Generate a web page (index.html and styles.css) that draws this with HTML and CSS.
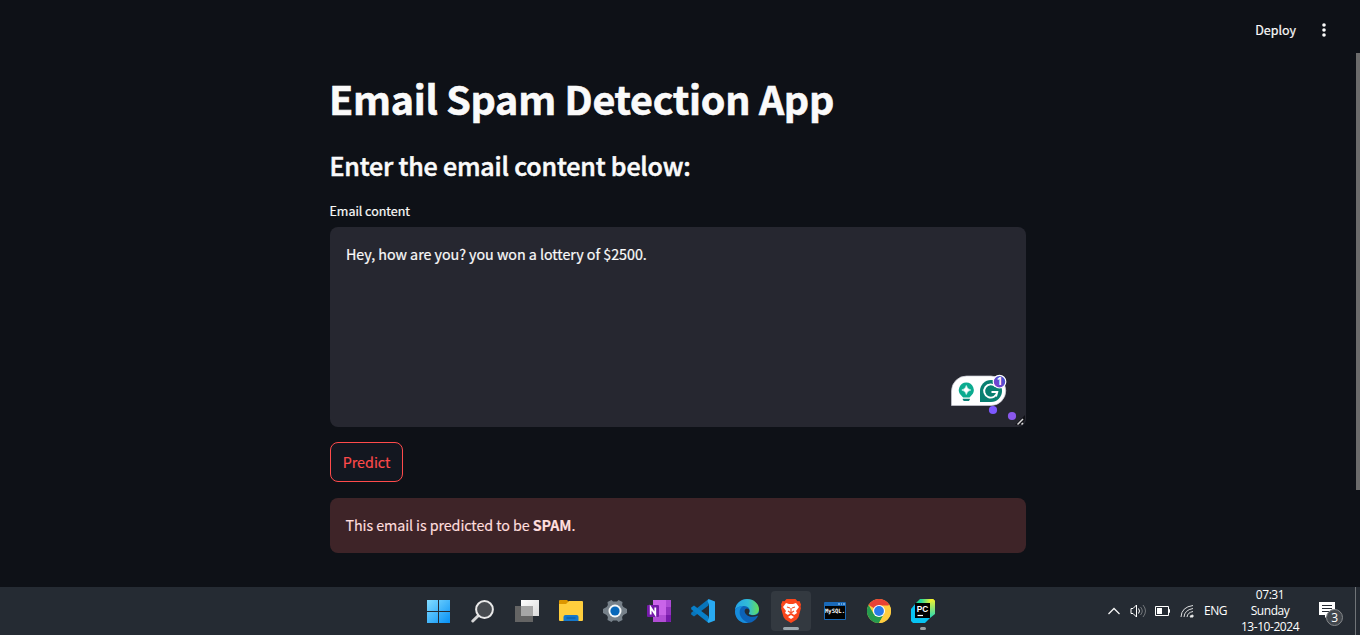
FILE: index.html
```html
<!DOCTYPE html>
<html lang="en">
<head>
<meta charset="utf-8">
<title>Email Spam Detection App</title>
<link rel="stylesheet" href="styles.css">
</head>
<body>
<div class="screen">
  <div class="app">
    <header class="toolbar">
      <span class="deploy">Deploy</span>
      <svg class="kebab" width="6" height="16" viewBox="0 0 6 16" fill="#fafafa"><circle cx="3" cy="3" r="1.8"/><circle cx="3" cy="8" r="1.8"/><circle cx="3" cy="13" r="1.8"/></svg>
    </header>
    <main class="content">
      <h1 class="title">Email Spam Detection App</h1>
      <h2 class="subtitle">Enter the email content below:</h2>
      <div class="label">Email content</div>
      <div class="textarea"><span class="value">Hey, how are you? you won a lottery of $2500.</span>
        <svg class="assistant" width="80" height="56" viewBox="946 371 80 56">
          <defs><linearGradient id="badge" x1="0" y1="1" x2="1" y2="0"><stop offset="0" stop-color="#8a3bd0"/><stop offset="1" stop-color="#3558cc"/></linearGradient></defs>
          <path d="M951.5 405.5V391a15 15 0 0 1 15-15H991a14.5 14.5 0 0 1 0 29.5z" fill="#fff" stroke="#c9cad2" stroke-width=".7"/>
          <path d="M966.300 382.500a7.500 7.500 0 0 1 5 13l-1.800 2h-6.400l-1.800-2a7.500 7.500 0 0 1 5-13z" fill="#0bab8f"/>
          <path d="M966.300 385.500q.7 3.800 4.500 4.500-3.800.7-4.500 4.500-.7-3.800-4.500-4.500 3.800-.7 4.500-4.500z" fill="#fff" stroke="#fff" stroke-width=".6"/>
          <path d="M962.800 398.700h7v1.100l-1 1.200h-5l-1-1.200z" fill="#087f73"/>
          <path d="M980 402v-11a11 11 0 1 1 11 11z" fill="#087f70"/>
          <path d="M995.800 386.700a6.600 6.600 0 1 0 1.500 5.300H991.500M997.300 392l-1.300 4.500" fill="none" stroke="#fff" stroke-width="1.9"/>
          <circle cx="999.500" cy="381.700" r="6.300" fill="url(#badge)" stroke="#fff" stroke-width="1.200"/>
          <text x="999.500" y="385.400" text-anchor="middle" class="badge-text">1</text>
          <circle cx="993" cy="410" r="4.100" fill="#7d58ff"/><circle cx="1012" cy="416" r="4.100" fill="#8a58ec"/>
          <path d="M1015 425l10-10v5l-4 5z" fill="#101116"/>
          <path d="M1017.500 424.500l5.500-5.500M1021.500 424.500l1.500-1.500" stroke="#d8d8d8" stroke-width="1.500"/>
        </svg>
      </div>
      <button class="predict">Predict</button>
      <div class="alert">This email is predicted to be <strong>SPAM</strong>.</div>
    </main>
    <div class="scrollbar"></div>
  </div>

  <footer class="taskbar">
    <nav class="apps">
      <span class="cell low"><svg width="24" height="24" viewBox="0 0 24 24"><defs><linearGradient id="win" gradientUnits="userSpaceOnUse" x1="0" y1="0" x2="24" y2="24"><stop offset="0" stop-color="#83dcff"/><stop offset="1" stop-color="#008df5"/></linearGradient></defs><path d="M0 0h11v11H0zM12 0h11v11H12zM0 12h11v11H0zM12 12h11v11H12z" fill="url(#win)"/></svg></span>
      <span class="cell low"><svg width="24" height="24" viewBox="0 0 24 24"><path d="M8 15L1.800 21" stroke="#d4d5d6" stroke-width="3" stroke-linecap="round"/><circle cx="13.500" cy="9.500" r="8.400" fill="#474b50" stroke="#e9e9e9" stroke-width="2"/></svg></span>
      <span class="cell low"><svg width="24" height="24" viewBox="0 0 24 24"><defs><linearGradient id="tv" x1="0" y1="0" x2="1" y2="1"><stop stop-color="#fff"/><stop offset="1" stop-color="#d9d9d9"/></linearGradient></defs><path d="M6 0h18v16H6z" fill="url(#tv)"/><path d="M0 6h18v16H0z" fill="#646464"/><path d="M6 6h12v10H6z" fill="#a6a6a6"/></svg></span>
      <span class="cell low"><svg width="24" height="24" viewBox="0 0 24 24"><path d="M0 1q0-1 1-1h7l2 2-2 3H0z" fill="#dc9600"/><path d="M0 4h7l3-3h13q1 0 1 1v18q0 1-1 1H1q-1 0-1-1z" fill="#ffce3d"/><path d="M4.500 21v-4q0-2 2-2h11q2 0 2 2v4z" fill="#1477cb"/><path d="M7.500 18h9" stroke="#0759a5" stroke-width="1.200"/></svg></span>
      <span class="cell low"><svg width="24" height="24" viewBox="0 0 24 24"><path d="M8.500 0l1.500 1.500h4L15.500 0l4 2-.4 3 1.300 2 3.600 2v4l-3.600 2-1.300 2 .4 3-4 2-1.500-1.500h-4L8.500 22l-4-2 .4-3-1.300-2L0 13V9l3.600-2 1.300-2-.4-3z" fill="#77818a"/><circle cx="12" cy="11" r="6.500" fill="#f4f7f8"/><circle cx="12" cy="11" r="4.600" fill="#0868ba"/></svg></span>
      <span class="cell low"><svg width="24" height="24" viewBox="0 0 24 24"><path d="M6 0h17q1 0 1 1v20q0 1-1 1H6z" fill="#ca64e9"/><path d="M19 0h4q1 0 1 1v6h-5z" fill="#ae4bd5"/><path d="M19 7h5v8h-5z" fill="#9332bf"/><path d="M6 15h18v6q0 1-1 1H6z" fill="#7719aa" opacity=".3"/><path d="M19 15h5v6q0 1-1 1h-4z" fill="#7719aa"/><rect y="5" width="12" height="12" rx="1" fill="#751aaa"/><path d="M3.700 14.500v-7l4.600 7v-7" fill="none" stroke="#fff" stroke-width="1.800"/></svg></span>
      <span class="cell"><svg width="24" height="24" viewBox="0 0 24 24"><path d="M17.500 0v6.500L3 17.500.2 15.600v-1.800z" fill="#0874b9"/><path d="M17.500 24v-6.500L3 6.500.2 8.400v1.800z" fill="#087fc9"/><path d="M17.500 0L24 2.500v19L17.500 24l-1-1.500L18 18V6l-1.500-4z" fill="#29aaf2"/></svg></span>
      <span class="cell"><svg width="24" height="24" viewBox="0 0 24 24"><defs><linearGradient id="edge"><stop stop-color="#25a3e5"/><stop offset=".55" stop-color="#31bdd7"/><stop offset="1" stop-color="#65df55"/></linearGradient></defs><circle cx="12" cy="12" r="12" fill="#0c62b8"/><path d="M0 11C1 4 6 0 12 0c7 0 12 5 12 10 0 4-3 6-6 6-3 0-5-1-4-2 2-3 0-7-5-7-4 0-7 1-9 4z" fill="url(#edge)"/><path d="M0 12c1-3 4-5 8-5-3 2-4 5-3 9 1 3 4 6 8 8C5 25 0 19 0 12z" fill="#178cdb"/><path d="M10.500 10c-1.500 1.500-1 3.500.5 5.200 3 3 7.500 3.200 11.500 1.500l1.500 0v-3c-1.500 1.800-3.500 2.500-6 2.500-3 0-5-1-4-2.200.8-1.500.5-3-.5-4-1-.8-2.200-.8-3 0z" fill="#252b33"/></svg></span>
      <span class="cell active"><svg width="24" height="24" viewBox="0 0 24 24"><path d="M7.500 0h9l2 2.300 2-.3L22 5.500 21.500 8l.5 1-2.500 9-1.800 2.500L12 24l-5.700-3.500L4.500 18 2 9l.5-1L2 5.500 3.500 2l2 .3z" fill="#fb461b"/><path d="M7 4l3 1h4l3-1 3 4-3 4 1 2-3 2-1-1-2-1-2 1-1 1-3-2 1-2-3-4zM9 18l3-2 3 2-3 2z" fill="#fff"/><path d="M8 8l3 1M16 8l-3 1M12 9v5M9 12l3 2 3-2" stroke="#f7522a" stroke-width="1.200" fill="none"/></svg></span>
      <span class="cell"><svg width="24" height="24" viewBox="0 0 24 24"><rect x="1" y="3" width="22" height="18" rx="1" fill="#1969b8"/><path d="M2 7h20v13H2z" fill="#020303"/><path d="M15 5h2M18 5h1M20 5h2" stroke="#b9dfff"/><text x="2" y="13.500" class="mysql" textLength="20" lengthAdjust="spacingAndGlyphs">MySQL.</text></svg></span>
      <span class="cell"><svg width="24" height="24" viewBox="0 0 24 24"><circle cx="12" cy="12" r="12" fill="#ffcd40"/><path d="M12 12L1.600 6A12 12 0 0 1 22.400 6z" fill="#e84235"/><path d="M1.600 6A12 12 0 0 0 12 24l5.200-9L12 12 6.800 15z" fill="#259b4e"/><path d="M12 6.500h10.700A12 12 0 0 1 12 24l5-9z" fill="#ffcd40"/><circle cx="12" cy="12" r="6" fill="#fff"/><circle cx="12" cy="12" r="4.900" fill="#287ae9"/></svg></span>
      <span class="cell running"><svg width="24" height="24" viewBox="0 0 24 24"><defs><linearGradient id="pc"><stop stop-color="#21d789"/><stop offset=".3" stop-color="#21d7a0"/><stop offset=".8" stop-color="#f6f32b"/></linearGradient><linearGradient id="pcr" x2="0" y2="1"><stop stop-color="#f6f32b"/><stop offset="1" stop-color="#21d7b9"/></linearGradient></defs><path d="M0 10l5-6 14 15-5 5H2l-2-2z" fill="#07c3f2"/><path d="M4 5l5-5h13l2 2-5 3z" fill="url(#pc)"/><path d="M19 4l3-4 2 2v13l-5 4z" fill="url(#pcr)"/><path d="M4 4h15v15H4z" fill="#000"/><text x="5.800" y="12.500" class="pc" textLength="11.500" lengthAdjust="spacingAndGlyphs">PC</text><path d="M6.500 16.500h5.500" stroke="#fff" stroke-width="1.200"/></svg></span>
    </nav>
    <div class="tray">
      <svg class="chevron" width="14" height="10" viewBox="0 0 14 10"><path d="M1.500 8L7 2.500 12.500 8" fill="none" stroke="#f4f4f4" stroke-width="1.300"/></svg>
      <svg class="speaker" width="17" height="14" viewBox="0 0 17 14" fill="none"><path d="M1 4.500h2L6.500 1v12L3 9.500H1z" stroke="#fff"/><path d="M8.500 4.500q2 2.500 0 5" stroke="#fff"/><path d="M10.500 3q3.500 4 0 8M13 1q5 6 0 12" stroke="#73777b"/></svg>
      <svg class="battery" width="16" height="10" viewBox="0 0 16 10"><path d="M.5.500h13v9H.500zM13.500 3.500h1v3h-1" fill="none" stroke="#fff"/><path d="M2 2h5v6H2z" fill="#fff"/></svg>
      <svg class="wifi" width="14" height="14" viewBox="0 0 14 14" fill="none" stroke="#dedfe0"><path d="M1 13Q1.500 3 13 1.500M4 13Q4.500 6 13 4.500M7 13Q7.500 8.500 13 7.500"/><path d="M10 13q0-2 3-2v2z" fill="#fff"/></svg>
      <span class="lang">ENG</span>
      <div class="clock"><div>07:31</div><div>Sunday</div><div>13-10-2024</div></div>
      <svg class="notify" width="26" height="26" viewBox="0 0 26 26"><path d="M0 0h16v13H9l-3 3v-3H0z" fill="#fff"/><path d="M3 3.500h10M3 6.500h10M3 9.500h7" stroke="#252b34"/><circle cx="15.500" cy="15.500" r="8" fill="#42474d" stroke="#85888b"/><text x="15.500" y="19.500" text-anchor="middle" class="count">3</text></svg>
      <span class="edge-line"></span>
    </div>
  </footer>
</div>
</body>
</html>
```
FILE: styles.css
```css
* { box-sizing: border-box; }
body { margin: 0; background: #0e1117; color: #fafafa; font-family: "Noto Sans CJK SC", sans-serif; }
.screen { width: 1360px; height: 635px; display: flex; flex-direction: column; overflow: hidden; }
.app { height: 587px; position: relative; }
.toolbar { height: 60px; display: flex; justify-content: flex-end; align-items: center; gap: 25px; padding-right: 33px; }
.deploy { font-size: 12.5px; line-height: 20px; -webkit-text-stroke: .2px; }
.content { width: 696px; margin-left: 330px; display: flex; flex-direction: column; align-items: flex-start; }
.title { margin: 12px 0 0 -1px; font-size: 39.4px; line-height: 52px; font-weight: 700; letter-spacing: -.26px; -webkit-text-stroke: .6px; white-space: nowrap; }
.subtitle { margin: 24px 0 0 -.5px; font-size: 25px; line-height: 34px; font-weight: 500; letter-spacing: -.18px; -webkit-text-stroke: .55px; white-space: nowrap; }
.label { margin: 19px 0 0 -.5px; font-size: 12.5px; line-height: 20px; letter-spacing: -.03px; -webkit-text-stroke: .2px; }
.textarea { margin-top: 6px; width: 696px; height: 200px; border-radius: 8px; background: #262730; padding: 15px 16px; position: relative; overflow: hidden; font-size: 14.3px; line-height: 24px; letter-spacing: -.035px; -webkit-text-stroke: .2px; }
.assistant { position: absolute; right: 0; bottom: 0; -webkit-text-stroke: 0; }
.badge-text { font: bold 10px "Open Sans", sans-serif; fill: #fff; }
.predict { margin: 15px 0 0; width: 73px; height: 40px; padding: 0; border: 1px solid #ff4b4b; border-radius: 8px; background: #131720; color: #ff4b4b; font-family: inherit; font-size: 14.3px; line-height: 24px; -webkit-text-stroke: .15px; }
.alert { margin-top: 16px; width: 696px; height: 55px; border-radius: 8px; background: #3e2428; color: #ffdede; padding: 15px 15.5px; font-size: 14.3px; line-height: 24px; letter-spacing: -.08px; -webkit-text-stroke: .15px; }
.scrollbar { position: absolute; right: 0; top: 53px; width: 4px; height: 437px; background: #6b6b6b; }
.taskbar { height: 48px; display: flex; justify-content: space-between; background: #252b33; font-family: "Open Sans", sans-serif; color: #fff; }
.apps { display: flex; margin-left: 417px; padding-top: 4px; }
.cell { width: 40px; height: 40px; margin: 0 2px; display: flex; align-items: center; justify-content: center; border-radius: 4px; position: relative; }
.low { padding-top: 2px; }
.active { background: #333940; }
.active::after, .running::after { content: ""; position: absolute; bottom: 1px; width: 16px; height: 3px; border-radius: 2px; background: #9ba6ac; }
.running::after { width: 6px; background: #9b9fa2; }
.mysql { font: bold 6px "DejaVu Sans Mono", monospace; fill: #fff; }
.pc { font: bold 8.5px "Liberation Sans", sans-serif; fill: #fff; }
.tray { display: flex; align-items: center; font-size: 12px; letter-spacing: -.45px; }
.speaker { margin-left: 9px; }
.battery { margin-left: 8px; }
.wifi { margin-left: 9px; }
.lang { width: 24px; margin: -1px 0 0 10px; }
.clock { width: 60px; margin-left: 12px; text-align: center; line-height: 16px; white-space: nowrap; }
.notify { margin: 8px 0 0 19px; }
.count { font: 12px "Open Sans", sans-serif; fill: #fff; }
.edge-line { width: 1px; height: 48px; margin: 0 4px 0 10px; background: #707478; }
```
